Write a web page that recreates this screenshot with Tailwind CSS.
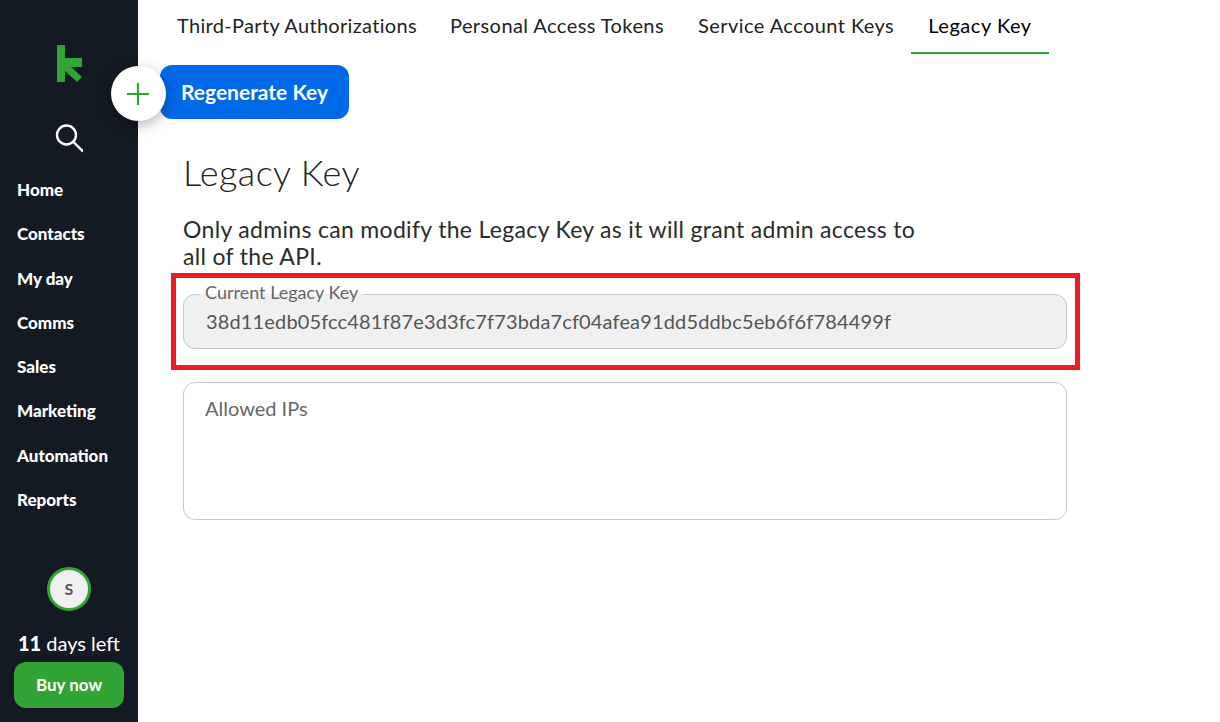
<!DOCTYPE html>
<html lang="en">
<head>
<meta charset="UTF-8">
<title>Legacy Key</title>
<script src="https://cdn.jsdelivr.net/npm/@tailwindcss/browser@4"></script>
</head>
<body class="bg-white font-['Lato',sans-serif] h-[722px] w-[1220px] overflow-hidden flex relative">

<!-- sidebar -->
<aside class="w-[138px] h-[722px] shrink-0 bg-[#141a23] flex flex-col items-stretch relative">
  <div class="h-[45px]"></div>
  <svg class="ml-[57px] w-[25px] h-[37px]" viewBox="0 0 25 37"><path fill="#32a335" d="M0 0h8v13h17v9h-11l11 10-5 5L8 26v11H0z"/></svg>
  <svg class="ml-[55px] mt-[41px] w-[28px] h-[30px]" viewBox="0 0 28 30" fill="none" stroke="#fff" stroke-width="2.4" stroke-linecap="round"><circle cx="11.5" cy="12" r="9.5"/><path d="M18.5 19l9 9"/></svg>
  <nav class="mt-[25px] pl-[17px] flex flex-col gap-[21px] text-white font-black text-[17px] leading-[23.3px]">
    <a>Home</a><a>Contacts</a><a>My day</a><a>Comms</a><a>Sales</a><a>Marketing</a><a>Automation</a><a>Reports</a>
  </nav>
  <div class="mt-auto flex flex-col items-center pb-[14px]">
    <div class="w-[44px] h-[44px] rounded-full bg-[#f0f0f0] border-[3px] border-[#32a335] flex items-center justify-center text-[#555] font-bold text-[16px]">S</div>
    <div class="mt-[20px] text-white text-[20px] leading-[24px]"><b class="font-black">11</b> days left</div>
    <button class="mt-[7px] w-[110px] h-[46px] rounded-[12px] bg-[#32a335] text-white font-bold text-[17px]">Buy now</button>
  </div>
</aside>

<!-- floating add button -->
<div class="absolute left-[111px] top-[66px] w-[55px] h-[55px] rounded-full bg-white shadow-[0_4px_14px_rgba(0,0,0,0.3)] flex items-center justify-center">
  <svg class="w-[22px] h-[22px] -ml-px" viewBox="0 0 22 22" stroke="#32a335" stroke-width="2.2"><path d="M11 0v22M0 11h22"/></svg>
</div>

<main class="flex-1 pl-[22px]">
  <div class="flex h-[54px] text-[20px] tracking-[0.43px] text-[#222]">
    <a class="px-[17px] pt-[10px] mr-[-1px] tracking-[0.32px]">Third-Party Authorizations</a>
    <a class="px-[17px] pt-[10px]">Personal Access Tokens</a>
    <a class="px-[17px] pt-[10px]">Service Account Keys</a>
    <a class="px-[17px] pt-[10px] border-b-2 border-[#32a335] text-black tracking-[0.55px]">Legacy Key</a>
  </div>
  <button class="mt-[11px] block w-[189px] h-[54px] rounded-[12px] bg-[#0069e8] text-white font-bold text-[21px]">Regenerate Key</button>
  <div class="pl-[23px] w-[907px]">
    <h1 class="mt-[31px] text-[36px] leading-[44px] font-light tracking-[0.4px] text-[#222]">Legacy Key</h1>
    <p class="mt-[22px] w-[745px] text-[23px] tracking-[0.32px] leading-[27px] text-[#2b2b2b]">Only admins can modify the Legacy Key as it will grant admin access to all of the API.</p>
    <fieldset class="mt-[16px] h-[63px] rounded-[12px] border border-[#c8c8c8] bg-[#f0f0f0] pl-[17px] pr-[17px]">
      <legend class="ml-[-1px] px-[5px] text-[18px] leading-[17px] text-[#666] -translate-y-[2px]">Current Legacy Key</legend>
      <div class="text-[20px] tracking-[0.15px] leading-[26px] mt-[5px] pl-[5px] text-[#555]">38d11edb05fcc481f87e3d3fc7f73bda7cf04afea91dd5ddbc5eb6f6f784499f</div>
    </fieldset>
    <div class="mt-[33px] h-[138px] rounded-[12px] border border-[#c8c8c8] px-[21px] pt-[12px] text-[20px] leading-[26px] text-[#666]">Allowed IPs</div>
  </div>
</main>

<!-- red annotation box from the screenshot -->
<div class="absolute left-[171px] top-[273px] w-[909px] h-[97px] border-[5px] border-[#ed1c24]"></div>
</body>
</html>
